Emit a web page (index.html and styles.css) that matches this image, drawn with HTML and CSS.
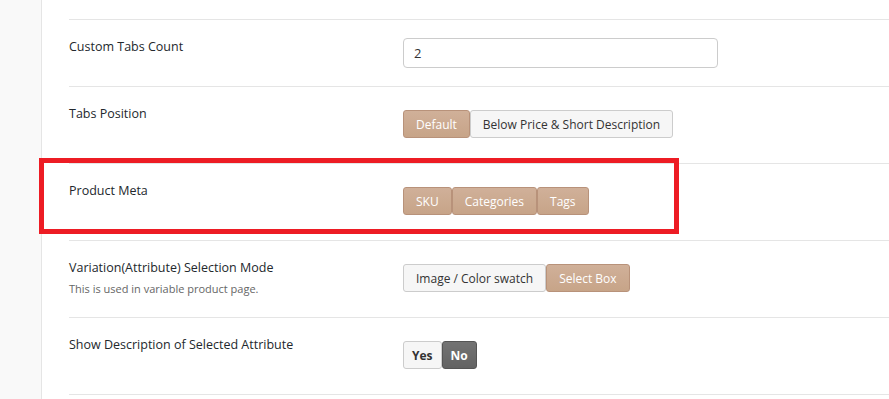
FILE: index.html
```html
<!DOCTYPE html>
<html lang="en">
<head>
    <meta charset="UTF-8">
    <meta name="viewport" content="width=device-width, initial-scale=1.0">
    <title>Product Page Settings</title>
    <link rel="stylesheet" href="styles.css">
</head>
<body>

    <div class="page">
        <aside class="sidebar"></aside>

        <main class="settings">

            <div class="row row-input">
                <div class="label">Custom Tabs Count</div>
                <div class="control">
                    <input class="text-input" type="text" value="2">
                </div>
            </div>

            <div class="row">
                <div class="label">Tabs Position</div>
                <div class="control">
                    <div class="btn-group">
                        <span class="btn btn-on">Default</span>
                        <span class="btn">Below Price &amp; Short Description</span>
                    </div>
                </div>
            </div>

            <div class="row row-marked">
                <div class="label">Product Meta</div>
                <div class="control">
                    <div class="btn-group">
                        <span class="btn btn-on">SKU</span>
                        <span class="btn btn-on">Categories</span>
                        <span class="btn btn-on">Tags</span>
                    </div>
                </div>
            </div>

            <div class="row">
                <div class="label">
                    Variation(Attribute) Selection Mode
                    <p class="desc">This is used in variable product page.</p>
                </div>
                <div class="control">
                    <div class="btn-group">
                        <span class="btn">Image / Color swatch</span>
                        <span class="btn btn-on">Select Box</span>
                    </div>
                </div>
            </div>

            <div class="row">
                <div class="label">Show Description of Selected Attribute</div>
                <div class="control">
                    <div class="btn-group switch">
                        <span class="btn">Yes</span>
                        <span class="btn btn-dark">No</span>
                    </div>
                </div>
            </div>

        </main>
    </div>

</body>
</html>
```

FILE: styles.css
```css
body {
    margin: 0;
    background: #fff;
    font-family: "Open Sans", "Noto Sans", sans-serif;
    font-size: 13px;
    color: #23282d;
}

.page {
    display: flex;
    min-height: 399px;
}

.sidebar {
    width: 41px;
    flex-shrink: 0;
    background: #f9f9f9;
    border-right: 1px solid #e5e5e5;
}

.settings {
    flex: 1;
    padding: 19px 0 0 27px;
}

.row {
    display: grid;
    grid-template-columns: 334px 1fr;
    padding: 18px 0;
    border-top: 1px solid #e5e5e5;
}

.row:last-child {
    border-bottom: 1px solid #e5e5e5;
}

/* annotation box drawn over the Product Meta row */
.row-marked {
    position: relative;
}

.row-marked::after {
    content: "";
    position: absolute;
    left: -30px;
    top: -6px;
    width: 630px;
    height: 66px;
    border: 5px solid #ed1c24;
}

.label {
    padding-top: 1px;
    font-size: 12.5px;
    line-height: 16px;
}

.desc {
    margin: 5px 0 0;
    font-size: 11px;
    line-height: 16px;
    color: #666;
}

.text-input {
    box-sizing: border-box;
    width: 315px;
    height: 30px;
    padding: 0 10px;
    border: 1px solid #ccc;
    border-radius: 4px;
    font-family: inherit;
    font-size: 13px;
    color: #333;
    outline: none;
}

.btn-group {
    display: flex;
    margin: 5px 0 7px;
}

.btn {
    box-sizing: border-box;
    height: 28px;
    line-height: 27px;
    padding: 0 12px;
    border: 1px solid #ccc;
    border-radius: 3px;
    background: #f6f6f6;
    color: #333;
    font-size: 12px;
    white-space: nowrap;
}

.btn-on {
    background: linear-gradient(#d0b099, #c7a488);
    border-color: #b8927a;
    color: #fff;
}

.switch .btn {
    font-weight: bold;
    padding: 0 8px;
}

.btn-dark {
    background: linear-gradient(#737373, #636363);
    border-color: #555;
    color: #fff;
}
```
